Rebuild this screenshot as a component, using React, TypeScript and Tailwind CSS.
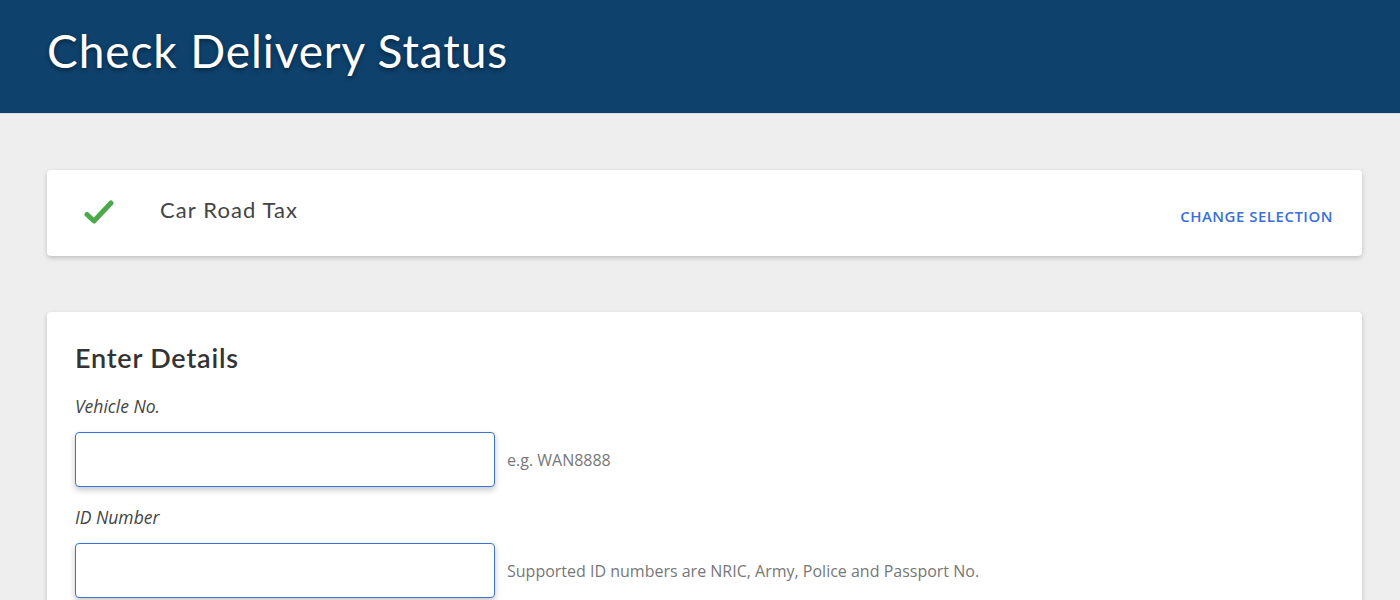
const HEAD = { fontFamily: '"Lato", "Noto Sans", sans-serif' };
const BODY = { fontFamily: '"Open Sans", "Noto Sans", sans-serif' };

function Field({ label, hint }: { label: string; hint: string }) {
  return (
    <div className="flex flex-col">
      <label className="text-[17.5px] italic leading-[24px] text-[#444]" style={BODY}>
        {label}
      </label>
      <div className="mt-[14px] flex items-center gap-[12px]">
        <input
          type="text"
          className="h-[55px] w-[420px] rounded-[4px] border border-[#3b72d9] bg-white px-3 shadow-[0_3px_6px_rgba(0,0,0,0.22)] outline-none"
        />
        <span className="text-[16px] text-[#777]" style={BODY}>
          {hint}
        </span>
      </div>
    </div>
  );
}

export default function App() {
  return (
    <div className="min-h-screen bg-[#eeeeee]">
      <header className="h-[114px] border-b border-[#d8dde3] bg-[#0e416c] pl-[47px] pt-[24px]">
        <h1
          className="text-[46px] font-normal leading-[54px] tracking-[0.9px] text-white [text-shadow:0_2px_4px_rgba(0,0,0,0.45)]"
          style={HEAD}
        >
          Check Delivery Status
        </h1>
      </header>

      <main className="flex flex-col gap-[56px] px-[47px] pr-[38px] pt-[56px]">
        <div className="flex h-[86px] items-center rounded-[4px] bg-white pl-[37px] pr-[29px] shadow-[0_2px_5px_rgba(0,0,0,0.2)]">
          <svg width="30" height="26" viewBox="0 0 30 26" className="-mt-[2px]">
            <path
              d="M3 15.5 L10 22 L27 4"
              fill="none"
              stroke="#4ca94a"
              strokeWidth="5"
              strokeLinecap="round"
              strokeLinejoin="round"
            />
          </svg>
          <span className="ml-[46px] -mt-[7px] text-[22px] tracking-[1.1px] text-[#444]" style={HEAD}>
            Car Road Tax
          </span>
          <a
            href="#"
            className="ml-auto mt-[6px] text-[15px] font-semibold tracking-[0.5px] text-[#3a6fd6]"
            style={BODY}
          >
            CHANGE SELECTION
          </a>
        </div>

        <section className="flex flex-col rounded-[4px] bg-white px-[28px] pt-[28px] pb-10 shadow-[0_2px_5px_rgba(0,0,0,0.2)]">
          <h2 className="text-[27px] font-semibold leading-[36px] tracking-[0.8px] text-[#333]" style={HEAD}>
            Enter Details
          </h2>
          <div className="mt-[18px] flex flex-col gap-[18px]">
            <Field label="Vehicle No." hint="e.g. WAN8888" />
            <Field label="ID Number" hint="Supported ID numbers are NRIC, Army, Police and Passport No." />
          </div>
        </section>
      </main>
    </div>
  );
}
